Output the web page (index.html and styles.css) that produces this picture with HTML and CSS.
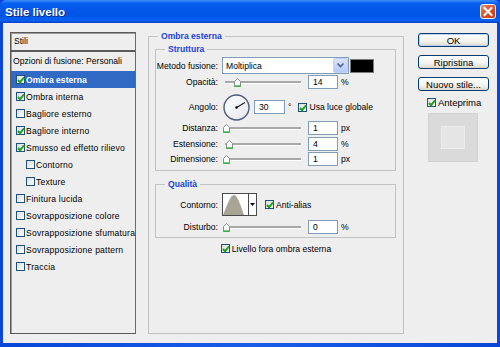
FILE: index.html
```html
<!DOCTYPE html>
<html lang="it">
<head>
<meta charset="utf-8">
<title>Stile livello</title>
<link rel="stylesheet" href="styles.css">
</head>
<body>
<div class="window">
  <div class="titlebar">
    <span class="title">Stile livello</span>
    <span class="close"><svg width="14" height="13" viewBox="0 0 14 13"><path d="M3.5 3L10.5 10M10.5 3L3.5 10" stroke="#fff" stroke-width="2" stroke-linecap="square"/></svg></span>
  </div>
  <div class="client">
    <div class="stylelist">
      <div class="list-head">Stili</div>
      <div class="opts">Opzioni di fusione: Personali</div>
      <div class="row sel"><span class="cb on"></span>Ombra esterna</div>
      <div class="row"><span class="cb on"></span>Ombra interna</div>
      <div class="row"><span class="cb"></span>Bagliore esterno</div>
      <div class="row"><span class="cb on"></span>Bagliore interno</div>
      <div class="row"><span class="cb on"></span>Smusso ed effetto rilievo</div>
      <div class="row ind"><span class="cb"></span>Contorno</div>
      <div class="row ind"><span class="cb"></span>Texture</div>
      <div class="row"><span class="cb"></span>Finitura lucida</div>
      <div class="row"><span class="cb"></span>Sovrapposizione colore</div>
      <div class="row"><span class="cb"></span>Sovrapposizione sfumatura</div>
      <div class="row"><span class="cb"></span>Sovrapposizione pattern</div>
      <div class="row"><span class="cb"></span>Traccia</div>
    </div>

    <fieldset class="grp main">
      <legend>Ombra esterna</legend>
      <fieldset class="grp sub struttura">
        <legend>Struttura</legend>
        <div class="frow r1">
          <span class="lbl">Metodo fusione:</span>
          <div class="select"><span>Moltiplica</span><span class="drop"><svg width="9" height="7" viewBox="0 0 9 7"><path d="M1.5 1.5L4.5 4.5L7.5 1.5" fill="none" stroke="#4d6185" stroke-width="1.6"/></svg></span></div>
          <span class="swatch"></span>
        </div>
        <div class="frow r2">
          <span class="lbl">Opacità:</span>
          <div class="slider"><span class="thumb" style="left:9px"><svg width="7" height="9" viewBox="0 0 7 9"><path d="M0.5 3.5L3.5 0.5L6.5 3.5V8.5H0.5Z" fill="#fff" stroke="#8a8a8a"/><path d="M0.5 8H6.5" stroke="#2fb43a" stroke-width="1.4"/></svg></span></div>
          <span class="num">14</span><span class="unit">%</span>
        </div>
        <div class="frow r3">
          <span class="lbl">Angolo:</span>
          <svg class="dial" width="27" height="27" viewBox="0 0 27 27"><defs><linearGradient id="dg" x1="0" y1="0" x2="1" y2="1"><stop offset="0" stop-color="#ffffff"/><stop offset="1" stop-color="#e4e6ee"/></linearGradient></defs><circle cx="13.5" cy="13.5" r="12.5" fill="url(#dg)" stroke="#4d5b7c" stroke-width="1.4"/><path d="M13.5 13.5L22 8.6" stroke="#222" stroke-width="1.1"/><circle cx="13.5" cy="13.5" r="1.2" fill="#000"/></svg>
          <span class="num ang">30</span><span class="unit">°</span>
          <span class="cb on gl"></span><span class="cbt">Usa luce globale</span>
        </div>
        <div class="frow r4">
          <span class="lbl">Distanza:</span>
          <div class="slider"><span class="thumb" style="left:-2px"><svg width="7" height="9" viewBox="0 0 7 9"><path d="M0.5 3.5L3.5 0.5L6.5 3.5V8.5H0.5Z" fill="#fff" stroke="#8a8a8a"/><path d="M0.5 8H6.5" stroke="#2fb43a" stroke-width="1.4"/></svg></span></div>
          <span class="num">1</span><span class="unit">px</span>
        </div>
        <div class="frow r5">
          <span class="lbl">Estensione:</span>
          <div class="slider"><span class="thumb" style="left:1px"><svg width="7" height="9" viewBox="0 0 7 9"><path d="M0.5 3.5L3.5 0.5L6.5 3.5V8.5H0.5Z" fill="#fff" stroke="#8a8a8a"/><path d="M0.5 8H6.5" stroke="#2fb43a" stroke-width="1.4"/></svg></span></div>
          <span class="num">4</span><span class="unit">%</span>
        </div>
        <div class="frow r6">
          <span class="lbl">Dimensione:</span>
          <div class="slider"><span class="thumb" style="left:-2px"><svg width="7" height="9" viewBox="0 0 7 9"><path d="M0.5 3.5L3.5 0.5L6.5 3.5V8.5H0.5Z" fill="#fff" stroke="#8a8a8a"/><path d="M0.5 8H6.5" stroke="#2fb43a" stroke-width="1.4"/></svg></span></div>
          <span class="num">1</span><span class="unit">px</span>
        </div>
      </fieldset>

      <fieldset class="grp sub qualita">
        <legend>Qualità</legend>
        <div class="frow q1">
          <span class="lbl">Contorno:</span>
          <div class="contour">
            <svg class="curve" width="25" height="21" viewBox="0 0 25 21"><path d="M0 21C4 12 7 1 11 1C14 1 17 9 21 21Z" fill="#a9a596"/></svg>
            <span class="cdrop"><svg width="5" height="3" viewBox="0 0 5 3"><path d="M0 0H5L2.5 3Z" fill="#000"/></svg></span>
          </div>
          <span class="cb on aa"></span><span class="cbt">Anti-alias</span>
        </div>
        <div class="frow q2">
          <span class="lbl">Disturbo:</span>
          <div class="slider"><span class="thumb" style="left:-2px"><svg width="7" height="9" viewBox="0 0 7 9"><path d="M0.5 3.5L3.5 0.5L6.5 3.5V8.5H0.5Z" fill="#fff" stroke="#8a8a8a"/><path d="M0.5 8H6.5" stroke="#2fb43a" stroke-width="1.4"/></svg></span></div>
          <span class="num">0</span><span class="unit">%</span>
        </div>
      </fieldset>

      <div class="knock"><span class="cb on"></span><span class="cbt">Livello fora ombra esterna</span></div>
    </fieldset>

    <div class="side">
      <div class="btn default">OK</div>
      <div class="btn">Ripristina</div>
      <div class="btn">Nuovo stile...</div>
      <div class="preview-check"><span class="cb on"></span><span class="cbt">Anteprima</span></div>
      <div class="preview"><div class="preview-inner"></div></div>
    </div>
  </div>
</div>
</body>
</html>
```
FILE: styles.css
```css
* { box-sizing: border-box; }

body {
  margin: 0;
  font-family: "Liberation Sans", Arial, sans-serif;
  color: #000;
  background: #fff;
}

.window {
  width: 500px;
  height: 347px;
  display: flex;
  flex-direction: column;
  background: linear-gradient(to right, #0846d8, #1a5ce8 50%, #0846d8);
}

.titlebar {
  height: 23px;
  flex: none;
  display: flex;
  align-items: center;
  justify-content: space-between;
  padding: 0 4px 0 5px;
  background: linear-gradient(to bottom, #3f90f9 0px, #0b62ef 3px, #0257e8 9px, #0055e8 16px, #0763f4 20px, #0a4fda 22px, #0836c0 23px);
  border-radius: 6px 6px 0 0;
}

.title {
  color: #fff;
  font-weight: bold;
  font-size: 11.5px;
  text-shadow: 1px 1px 0 #0a2a8a;
}

.close {
  width: 16px;
  height: 15px;
  display: flex;
  align-items: center;
  justify-content: center;
  border: 1px solid #f2f2f2;
  border-radius: 3px;
  background: linear-gradient(135deg, #ee8a6c, #d8512b 50%, #c23d16);
}

.client {
  flex: 1;
  display: flex;
  align-items: flex-start;
  margin: 0 3px 4px 3px;
  padding: 9px 0 0 7px;
  background: #eeeeee;
}

/* Style list */
.stylelist {
  width: 126px;
  height: 302px;
  flex: none;
  border: 1px solid #5a5a5a;
  border-right-color: #6a6a6a;
  box-shadow: inset 1px 1px 0 #9a9a9a;
  background: #eeeeee;
  font-size: 8.6px;
}

.list-head {
  height: 19px;
  line-height: 17px;
  padding-left: 3px;
  border-bottom: 2px solid #5a5a5a;
}

.opts {
  height: 19px;
  line-height: 19px;
  padding-left: 2px;
}

.row {
  height: 17px;
  display: flex;
  align-items: center;
  padding-left: 5px;
  white-space: nowrap;
  letter-spacing: 0.2px;
}

.row.sel {
  background: #316ac5;
  color: #fff;
  font-weight: bold;
  letter-spacing: 0;
}

.row.ind { padding-left: 15px; }

.row .cb { margin-right: 1px; }

.cb {
  width: 9px;
  height: 9px;
  flex: none;
  position: relative;
  border: 1px solid #1c5180;
  background: linear-gradient(135deg, #dcdcd6, #ffffff);
}

.cb.on::after {
  content: "";
  position: absolute;
  left: 2px;
  top: 0px;
  width: 2px;
  height: 5px;
  border-right: 2px solid #21a121;
  border-bottom: 2px solid #21a121;
  transform: rotate(40deg);
}

.cbt { margin-left: 2px; white-space: nowrap; }

/* Group boxes */
.grp {
  margin: 0;
  padding: 0;
  border: 1px solid #c3c3c3;
  min-width: 0;
}

.grp > legend {
  margin-left: 9px;
  padding: 0 3px;
  color: #1b45d8;
  font-weight: bold;
  font-size: 8.6px;
  line-height: 9px;
}

.main {
  width: 256px;
  height: 302px;
  margin-left: 12px;
  flex: none;
}

.sub {
  margin: 4px 7px 0 6px;
}

.struttura { padding: 3px 0 4px 0; }
.qualita { margin-top: 9px; padding: 4px 0 3px 0; }

.frow {
  display: flex;
  align-items: center;
  font-size: 8.6px;
  white-space: nowrap;
}

.lbl {
  width: 62px;
  flex: none;
  text-align: right;
  margin-right: 4px;
}

.r1 { height: 17px; }
.r2 { height: 14px; margin-top: 1px; }
.r3 { height: 28px; margin-top: 4px; }
.r4 { height: 14px; }
.r5 { height: 14px; margin-top: 2px; }
.r6 { height: 14px; margin-top: 1px; }
.q1 { height: 23px; }
.q2 { height: 14px; margin-top: 4px; }

.select {
  width: 127px;
  height: 17px;
  display: flex;
  align-items: center;
  justify-content: space-between;
  padding: 0 0 0 3px;
  border: 1px solid #7f9db9;
  background: #fff;
}

.drop {
  width: 15px;
  height: 15px;
  display: flex;
  align-items: center;
  justify-content: center;
  border: 1px solid #c2d2f7;
  border-radius: 2px;
  background: linear-gradient(#d7e3fd, #b6cbf8);
}

.swatch {
  width: 24px;
  height: 14px;
  margin-left: 1px;
  background: #000;
  border: 1px solid #7a7a7a;
}

.slider {
  width: 76px;
  height: 14px;
  margin-left: 3px;
  position: relative;
  flex: none;
}

.slider::before {
  content: "";
  position: absolute;
  left: 0;
  right: 0;
  top: 6px;
  height: 2px;
  background: #a8a8a8;
  border-bottom: 1px solid #fff;
}

.thumb {
  position: absolute;
  top: 3px;
  width: 7px;
  height: 9px;
  display: block;
}

.thumb svg { display: block; }

.num {
  width: 30px;
  height: 14px;
  margin-left: 7px;
  padding-left: 4px;
  line-height: 12px;
  border: 1px solid #7f9db9;
  background: #fff;
  flex: none;
}

.num.ang {
  width: 31px;
  margin-left: 4px;
}

.unit { margin-left: 3px; }

.dial { margin-left: 1px; flex: none; }

.gl { margin-left: 7px; }

.contour {
  display: flex;
  height: 23px;
  border: 1px solid #4a4a4a;
  background: #fff;
}

.curve { display: block; width: 25px; height: 21px; }

.cdrop {
  width: 8px;
  display: flex;
  align-items: center;
  justify-content: center;
  border-left: 1px solid #4a4a4a;
  background: #fff;
}

.aa { margin-left: 8px; }

.knock {
  height: 11px;
  margin-top: 5px;
  display: flex;
  align-items: center;
  justify-content: center;
  font-size: 8.6px;
}

/* Right column */
.side {
  width: 71px;
  margin-left: 14px;
  padding-top: 1px;
  display: flex;
  flex-direction: column;
  font-size: 9.5px;
  flex: none;
}

.btn {
  height: 14px;
  margin-bottom: 8px;
  display: flex;
  align-items: center;
  justify-content: center;
  border: 1px solid #003c74;
  border-radius: 3px;
  background: linear-gradient(#ffffff, #f3f3ef 60%, #dcd8cc);
}

.btn.default {
  box-shadow: inset 0 0 0 1px #bcd2f6;
}

.preview-check {
  height: 11px;
  margin-top: -2px;
  padding-left: 9px;
  display: flex;
  align-items: center;
}

.preview {
  width: 50px;
  height: 49px;
  margin: 5px 0 0 10px;
  display: flex;
  align-items: center;
  justify-content: center;
  background: #dadada;
  border: 1px solid #d2d2d2;
}

.preview-inner {
  width: 24px;
  height: 23px;
  background: #e5e5e5;
  border: 1px solid #ececec;
}
```
